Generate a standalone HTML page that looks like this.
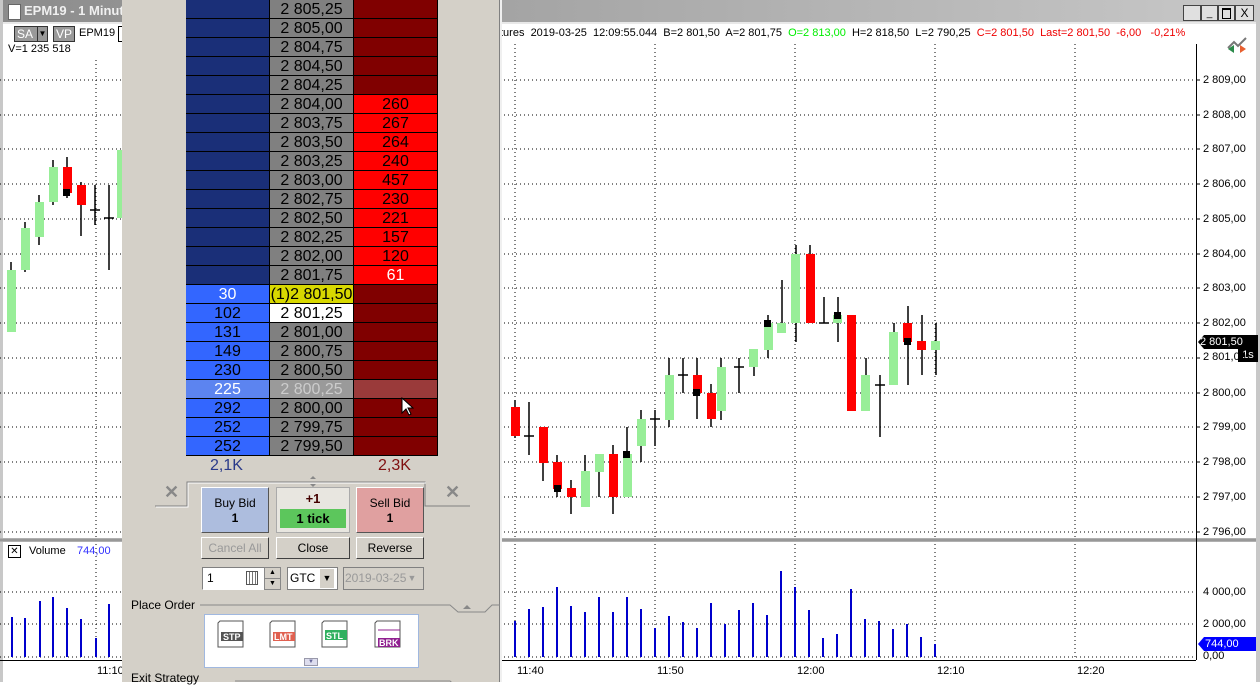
<!DOCTYPE html>
<html><head><meta charset="utf-8"><style>
body{margin:0;width:1260px;height:682px;overflow:hidden;position:relative;background:#fff;font-family:"Liberation Sans",sans-serif;}
.a{position:absolute;}
.row{position:absolute;left:186px;width:252px;height:19px;}
.c{position:absolute;top:0;height:18px;border-right:1px solid #000;border-bottom:1px solid #000;text-align:center;font-size:16px;line-height:19px;color:#000;}
.c1{left:0;width:83px;}.c2{left:84px;width:83px;}.c3{left:168px;width:83px;}
.btn{position:absolute;background:#d4d0c8;border:1px solid;border-color:#fff #404040 #404040 #fff;font-size:12px;text-align:center;line-height:20px;}
.ax{position:absolute;left:1203px;font-size:11px;color:#000;}
</style></head><body>
<div class="a" style="left:0;top:0;width:1260px;height:22px;background:linear-gradient(90deg,#8c8c8c,#c8c8c8);"></div>
<div class="a" style="left:0;top:22px;width:1260px;height:2px;background:#e8e8e8;"></div>
<div class="a" style="left:0;top:0;width:3px;height:682px;background:#c8c8c8;"></div>
<div class="a" style="left:8px;top:4px;width:11px;height:14px;background:#fff;border:1px solid #666;"></div>
<div class="a" style="left:24px;top:3px;font-size:13px;font-weight:bold;color:#f0f0f0;">EPM19 - 1 Minute</div>
<div class="a" style="left:1183px;top:5px;width:16px;height:14px;background:#e0e0e0;border:1px solid #444;"></div>
<div class="a" style="left:1201px;top:5px;width:15px;height:14px;background:#e0e0e0;border:1px solid #444;font-size:10px;line-height:16px;text-align:center;">_</div>
<div class="a" style="left:1218px;top:5px;width:15px;height:14px;background:#e0e0e0;border:1px solid #444;"><div style="margin:2px 3px;width:7px;height:8px;border:1px solid #000;border-top-width:2px"></div></div>
<div class="a" style="left:1235px;top:5px;width:17px;height:14px;background:#e0e0e0;border:1px solid #444;font-size:12px;line-height:14px;text-align:center;">X</div>
<div class="a" style="left:1256px;top:22px;width:4px;height:660px;background:#c8c8c8;"></div>

<svg class="a" style="left:0;top:0" width="1260" height="682">
<g stroke="#000" stroke-dasharray="1,3" stroke-width="1">
<line x1="0" x2="1196" y1="80" y2="80"/><line x1="0" x2="1196" y1="115" y2="115"/><line x1="0" x2="1196" y1="149" y2="149"/><line x1="0" x2="1196" y1="184" y2="184"/><line x1="0" x2="1196" y1="219" y2="219"/><line x1="0" x2="1196" y1="254" y2="254"/><line x1="0" x2="1196" y1="288" y2="288"/><line x1="0" x2="1196" y1="323" y2="323"/><line x1="0" x2="1196" y1="358" y2="358"/><line x1="0" x2="1196" y1="393" y2="393"/><line x1="0" x2="1196" y1="427" y2="427"/><line x1="0" x2="1196" y1="462" y2="462"/><line x1="0" x2="1196" y1="497" y2="497"/><line x1="0" x2="1196" y1="532" y2="532"/>
<line x1="0" x2="1196" y1="592" y2="592"/><line x1="0" x2="1196" y1="624" y2="624"/><line x1="0" x2="1196" y1="657" y2="657"/>
<line x1="96" x2="96" y1="60" y2="660"/><line x1="515" x2="515" y1="44" y2="660"/><line x1="655" x2="655" y1="44" y2="660"/><line x1="795" x2="795" y1="44" y2="660"/><line x1="935" x2="935" y1="44" y2="660"/><line x1="1075" x2="1075" y1="44" y2="660"/>
</g>
<rect x="0" y="538" width="1256" height="4" fill="#b0b0b0"/>
<line x1="0" x2="1256" y1="540" y2="540" stroke="#808080"/>
<line x1="1196.5" x2="1196.5" y1="44" y2="660" stroke="#000"/>
<line x1="0" x2="1196" y1="660.5" y2="660.5" stroke="#000"/>
<g stroke="#000" stroke-width="1.5">
<line x1="11" x2="11" y1="262" y2="332"/><line x1="25" x2="25" y1="222" y2="272"/><line x1="39" x2="39" y1="195" y2="245"/><line x1="53" x2="53" y1="160" y2="205"/><line x1="67" x2="67" y1="157" y2="198"/><line x1="81" x2="81" y1="182" y2="236"/><line x1="95" x2="95" y1="185" y2="225"/><line x1="109" x2="109" y1="185" y2="270"/>
<line x1="515" x2="515" y1="400" y2="438"/><line x1="529" x2="529" y1="402" y2="455"/><line x1="543" x2="543" y1="427" y2="481"/><line x1="557" x2="557" y1="455" y2="497"/><line x1="571" x2="571" y1="480" y2="514"/><line x1="585" x2="585" y1="455" y2="507"/><line x1="599" x2="599" y1="454" y2="497"/><line x1="613" x2="613" y1="445" y2="514"/><line x1="627" x2="627" y1="427" y2="497"/><line x1="641" x2="641" y1="410" y2="462"/><line x1="655" x2="655" y1="410" y2="446"/><line x1="669" x2="669" y1="358" y2="427"/><line x1="683" x2="683" y1="358" y2="393"/><line x1="697" x2="697" y1="358" y2="419"/><line x1="711" x2="711" y1="384" y2="427"/>
<line x1="721" x2="721" y1="358" y2="420"/><line x1="739" x2="739" y1="358" y2="393"/><line x1="754" x2="754" y1="349" y2="376"/><line x1="768" x2="768" y1="315" y2="358"/><line x1="782" x2="782" y1="280" y2="330"/><line x1="796" x2="796" y1="245" y2="342"/><line x1="810" x2="810" y1="245" y2="323"/><line x1="824" x2="824" y1="297" y2="323"/><line x1="838" x2="838" y1="297" y2="342"/><line x1="866" x2="866" y1="358" y2="411"/><line x1="880" x2="880" y1="375" y2="437"/><line x1="894" x2="894" y1="323" y2="385"/><line x1="908" x2="908" y1="306" y2="385"/><line x1="922" x2="922" y1="315" y2="375"/><line x1="936" x2="936" y1="323" y2="375"/>
<line x1="90" x2="100" y1="210" y2="210"/><line x1="104" x2="114" y1="218" y2="218"/><line x1="524" x2="534" y1="436" y2="436"/><line x1="650" x2="660" y1="419" y2="419"/><line x1="678" x2="688" y1="375" y2="375"/><line x1="734" x2="744" y1="367" y2="367"/><line x1="819" x2="829" y1="323" y2="323"/><line x1="875" x2="885" y1="385" y2="385"/>
</g>
<g fill="#98ee98">
<rect x="7" y="270" width="9" height="62"/><rect x="21" y="228" width="9" height="42"/><rect x="35" y="202" width="9" height="35"/><rect x="49" y="167" width="9" height="35"/><rect x="117" y="150" width="9" height="68"/>
<rect x="581" y="471" width="9" height="36"/><rect x="595" y="454" width="9" height="18"/><rect x="623" y="454" width="9" height="43"/><rect x="637" y="419" width="9" height="27"/><rect x="665" y="375" width="9" height="45"/>
<rect x="717" y="367" width="9" height="44"/><rect x="749" y="349" width="9" height="18"/><rect x="764" y="323" width="9" height="27"/><rect x="777" y="323" width="9" height="10"/><rect x="791" y="254" width="9" height="69"/><rect x="833" y="315" width="9" height="8"/><rect x="861" y="375" width="9" height="36"/><rect x="889" y="332" width="9" height="53"/><rect x="931" y="341" width="9" height="9"/>
</g>
<g fill="#ff0000">
<rect x="63" y="167" width="9" height="26"/><rect x="77" y="185" width="9" height="20"/>
<rect x="511" y="407" width="9" height="29"/><rect x="539" y="427" width="9" height="36"/><rect x="553" y="462" width="9" height="27"/><rect x="567" y="488" width="9" height="9"/><rect x="609" y="454" width="9" height="43"/><rect x="693" y="375" width="9" height="18"/><rect x="707" y="393" width="9" height="26"/>
<rect x="806" y="254" width="9" height="69"/><rect x="847" y="315" width="9" height="96"/><rect x="903" y="323" width="9" height="19"/><rect x="917" y="341" width="9" height="9"/>
</g>
<g fill="#000"><rect x="63" y="189" width="7" height="7"/><rect x="554" y="485" width="7" height="7"/><rect x="623" y="451" width="7" height="7"/><rect x="693" y="389" width="7" height="7"/><rect x="764" y="320" width="7" height="7"/><rect x="834" y="312" width="7" height="7"/><rect x="904" y="338" width="7" height="7"/></g>
<g stroke="#0000cc" stroke-width="2">
<line x1="12" x2="12" y1="617" y2="657"/><line x1="25" x2="25" y1="618" y2="657"/><line x1="40" x2="40" y1="601" y2="657"/><line x1="53" x2="53" y1="597" y2="657"/><line x1="67" x2="67" y1="608" y2="657"/><line x1="81" x2="81" y1="619" y2="657"/><line x1="96" x2="96" y1="638" y2="657"/><line x1="109" x2="109" y1="604" y2="657"/>
<line x1="515" x2="515" y1="621" y2="657"/><line x1="529" x2="529" y1="609" y2="657"/><line x1="543" x2="543" y1="607" y2="657"/><line x1="557" x2="557" y1="587" y2="657"/><line x1="571" x2="571" y1="606" y2="657"/><line x1="585" x2="585" y1="612" y2="657"/><line x1="599" x2="599" y1="597" y2="657"/><line x1="613" x2="613" y1="612" y2="657"/><line x1="627" x2="627" y1="597" y2="657"/><line x1="641" x2="641" y1="609" y2="657"/><line x1="655" x2="655" y1="628" y2="657"/><line x1="669" x2="669" y1="616" y2="657"/><line x1="683" x2="683" y1="622" y2="657"/><line x1="697" x2="697" y1="628" y2="657"/><line x1="711" x2="711" y1="603" y2="657"/><line x1="725" x2="725" y1="624" y2="657"/><line x1="739" x2="739" y1="610" y2="657"/><line x1="753" x2="753" y1="603" y2="657"/><line x1="767" x2="767" y1="615" y2="657"/><line x1="781" x2="781" y1="571" y2="657"/><line x1="795" x2="795" y1="587" y2="657"/><line x1="809" x2="809" y1="610" y2="657"/><line x1="823" x2="823" y1="638" y2="657"/><line x1="837" x2="837" y1="634" y2="657"/><line x1="851" x2="851" y1="589" y2="657"/><line x1="865" x2="865" y1="619" y2="657"/><line x1="879" x2="879" y1="621" y2="657"/><line x1="893" x2="893" y1="629" y2="657"/><line x1="907" x2="907" y1="624" y2="657"/><line x1="921" x2="921" y1="637" y2="657"/><line x1="935" x2="935" y1="644" y2="657"/>
</g>
<g stroke="#000"><line x1="1196" x2="1200" y1="80" y2="80"/><line x1="1196" x2="1200" y1="115" y2="115"/><line x1="1196" x2="1200" y1="149" y2="149"/><line x1="1196" x2="1200" y1="184" y2="184"/><line x1="1196" x2="1200" y1="219" y2="219"/><line x1="1196" x2="1200" y1="254" y2="254"/><line x1="1196" x2="1200" y1="288" y2="288"/><line x1="1196" x2="1200" y1="323" y2="323"/><line x1="1196" x2="1200" y1="358" y2="358"/><line x1="1196" x2="1200" y1="393" y2="393"/><line x1="1196" x2="1200" y1="427" y2="427"/><line x1="1196" x2="1200" y1="462" y2="462"/><line x1="1196" x2="1200" y1="497" y2="497"/><line x1="1196" x2="1200" y1="532" y2="532"/></g>
<polygon points="1198,342 1204,335 1258,335 1258,349 1204,349" fill="#000"/>
<polygon points="1198,644 1204,637 1256,637 1256,651 1204,651" fill="#0000ff"/>
<polyline points="1228,48 1234,42 1238,46 1246,38" fill="none" stroke="#777" stroke-width="2"/>
<polygon points="1228,49 1234,45 1234,53" fill="#2a8a4a"/><polygon points="1246,49 1240,45 1240,53" fill="#e86030"/>
</svg>
<div class="a" style="left:1200px;top:336px;font-size:11px;color:#fff;">2 801,50</div>
<div class="a" style="left:1238px;top:349px;width:20px;height:13px;background:#000;color:#fff;font-size:11px;text-align:center;">1s</div>
<div class="a" style="left:1205px;top:638px;font-size:11px;color:#fff;">744,00</div>
<div class="ax" style="top:74px">2 809,00</div><div class="ax" style="top:109px">2 808,00</div><div class="ax" style="top:143px">2 807,00</div><div class="ax" style="top:178px">2 806,00</div><div class="ax" style="top:213px">2 805,00</div><div class="ax" style="top:248px">2 804,00</div><div class="ax" style="top:282px">2 803,00</div><div class="ax" style="top:317px">2 802,00</div><div class="ax" style="top:351px">2 801,00</div><div class="ax" style="top:387px">2 800,00</div><div class="ax" style="top:421px">2 799,00</div><div class="ax" style="top:456px">2 798,00</div><div class="ax" style="top:491px">2 797,00</div><div class="ax" style="top:526px">2 796,00</div>
<div class="ax" style="top:586px">4 000,00</div><div class="ax" style="top:618px">2 000,00</div><div class="ax" style="top:650px">0,00</div>
<div class="a" style="left:97px;top:665px;font-size:11px;">11:10</div>
<div class="a" style="left:517px;top:665px;font-size:11px;">11:40</div><div class="a" style="left:657px;top:665px;font-size:11px;">11:50</div><div class="a" style="left:797px;top:665px;font-size:11px;">12:00</div><div class="a" style="left:937px;top:665px;font-size:11px;">12:10</div><div class="a" style="left:1077px;top:665px;font-size:11px;">12:20</div>
<div class="a" style="left:14px;top:26px;width:25px;height:14px;background:#999;border:1px solid #333;font-size:12px;color:#fff;line-height:14px;padding-left:2px">SA</div>
<div class="a" style="left:37px;top:26px;width:9px;height:14px;background:#999;border:1px solid #333;font-size:8px;color:#000;line-height:14px;text-align:center">▼</div>
<div class="a" style="left:53px;top:26px;width:20px;height:14px;background:#999;border:1px solid #333;font-size:12px;color:#fff;line-height:14px;text-align:center">VP</div>
<div class="a" style="left:79px;top:27px;font-size:11px;">EPM19</div>
<div class="a" style="left:118px;top:26px;width:4px;height:14px;border:1px solid #000;border-right:none;"></div>
<div class="a" style="left:8px;top:43px;font-size:11px;">V=1 235 518</div>
<div class="a" style="left:8px;top:545px;width:11px;height:11px;border:1px solid #000;font-size:10px;line-height:11px;text-align:center">✕</div>
<div class="a" style="left:29px;top:545px;font-size:11px;">Volume</div>
<div class="a" style="left:77px;top:545px;font-size:11px;color:#3030ff;">744,00</div>
<div class="a" style="left:500px;top:27px;font-size:11px;white-space:nowrap;">tures&nbsp; 2019-03-25&nbsp; 12:09:55.044&nbsp; B=2 801,50&nbsp; A=2 801,75&nbsp; <span style="color:#00ee00">O=2 813,00</span>&nbsp; H=2 818,50&nbsp; L=2 790,25&nbsp; <span style="color:#ee0000">C=2 801,50&nbsp; Last=2 801,50&nbsp; -6,00&nbsp;&nbsp; -0,21%</span></div>

<div class="a" style="left:122px;top:0;width:377px;height:682px;background:#d4d0c8;"></div>
<div class="a" style="left:499px;top:0;width:2px;height:682px;background:#f0f0f0;border-left:1px solid #808080"></div>
<div class="row" style="top:0"><div class="c c1" style="background:#1a2f78"></div><div class="c c2" style="background:#808080">2 805,25</div><div class="c c3" style="background:#800000"></div></div>
<div class="row" style="top:19px"><div class="c c1" style="background:#1a2f78"></div><div class="c c2" style="background:#808080">2 805,00</div><div class="c c3" style="background:#800000"></div></div>
<div class="row" style="top:38px"><div class="c c1" style="background:#1a2f78"></div><div class="c c2" style="background:#808080">2 804,75</div><div class="c c3" style="background:#800000"></div></div>
<div class="row" style="top:57px"><div class="c c1" style="background:#1a2f78"></div><div class="c c2" style="background:#808080">2 804,50</div><div class="c c3" style="background:#800000"></div></div>
<div class="row" style="top:76px"><div class="c c1" style="background:#1a2f78"></div><div class="c c2" style="background:#808080">2 804,25</div><div class="c c3" style="background:#800000"></div></div>
<div class="row" style="top:95px"><div class="c c1" style="background:#1a2f78"></div><div class="c c2" style="background:#808080">2 804,00</div><div class="c c3" style="background:#ff0000">260</div></div>
<div class="row" style="top:114px"><div class="c c1" style="background:#1a2f78"></div><div class="c c2" style="background:#808080">2 803,75</div><div class="c c3" style="background:#ff0000">267</div></div>
<div class="row" style="top:133px"><div class="c c1" style="background:#1a2f78"></div><div class="c c2" style="background:#808080">2 803,50</div><div class="c c3" style="background:#ff0000">264</div></div>
<div class="row" style="top:152px"><div class="c c1" style="background:#1a2f78"></div><div class="c c2" style="background:#808080">2 803,25</div><div class="c c3" style="background:#ff0000">240</div></div>
<div class="row" style="top:171px"><div class="c c1" style="background:#1a2f78"></div><div class="c c2" style="background:#808080">2 803,00</div><div class="c c3" style="background:#ff0000">457</div></div>
<div class="row" style="top:190px"><div class="c c1" style="background:#1a2f78"></div><div class="c c2" style="background:#808080">2 802,75</div><div class="c c3" style="background:#ff0000">230</div></div>
<div class="row" style="top:209px"><div class="c c1" style="background:#1a2f78"></div><div class="c c2" style="background:#808080">2 802,50</div><div class="c c3" style="background:#ff0000">221</div></div>
<div class="row" style="top:228px"><div class="c c1" style="background:#1a2f78"></div><div class="c c2" style="background:#808080">2 802,25</div><div class="c c3" style="background:#ff0000">157</div></div>
<div class="row" style="top:247px"><div class="c c1" style="background:#1a2f78"></div><div class="c c2" style="background:#808080">2 802,00</div><div class="c c3" style="background:#ff0000">120</div></div>
<div class="row" style="top:266px"><div class="c c1" style="background:#1a2f78"></div><div class="c c2" style="background:#808080">2 801,75</div><div class="c c3" style="background:#ff0000;color:#fff">61</div></div>
<div class="row" style="top:285px"><div class="c c1" style="background:#3366ff;color:#fff">30</div><div class="c c2" style="background:#d8d800">(1)2 801,50</div><div class="c c3" style="background:#800000"></div></div>
<div class="row" style="top:304px"><div class="c c1" style="background:#3366ff">102</div><div class="c c2" style="background:#fff">2 801,25</div><div class="c c3" style="background:#800000"></div></div>
<div class="row" style="top:323px"><div class="c c1" style="background:#3366ff">131</div><div class="c c2" style="background:#808080">2 801,00</div><div class="c c3" style="background:#800000"></div></div>
<div class="row" style="top:342px"><div class="c c1" style="background:#3366ff">149</div><div class="c c2" style="background:#808080">2 800,75</div><div class="c c3" style="background:#800000"></div></div>
<div class="row" style="top:361px"><div class="c c1" style="background:#3366ff">230</div><div class="c c2" style="background:#808080">2 800,50</div><div class="c c3" style="background:#800000"></div></div>
<div class="row" style="top:380px"><div class="c c1" style="background:#5c84f0;color:#fff">225</div><div class="c c2" style="background:#9a9a9a;color:#ccc">2 800,25</div><div class="c c3" style="background:#9a3a3a"></div></div>
<div class="row" style="top:399px"><div class="c c1" style="background:#3366ff">292</div><div class="c c2" style="background:#808080">2 800,00</div><div class="c c3" style="background:#800000"></div></div>
<div class="row" style="top:418px"><div class="c c1" style="background:#3366ff">252</div><div class="c c2" style="background:#808080">2 799,75</div><div class="c c3" style="background:#800000"></div></div>
<div class="row" style="top:437px"><div class="c c1" style="background:#3366ff">252</div><div class="c c2" style="background:#808080">2 799,50</div><div class="c c3" style="background:#800000"></div></div>
<svg class="a" style="left:400px;top:397px" width="14" height="20"><polygon points="2,1 2,16 6,12 9,18 11,17 8,11 13,11" fill="#fff" stroke="#000"/></svg>
<div class="a" style="left:210px;top:457px;font-size:16px;color:#2a3a8a;">2,1K</div>
<div class="a" style="left:378px;top:457px;font-size:16px;color:#801010;">2,3K</div>
<svg class="a" style="left:155px;top:475px" width="315" height="35"><polyline points="0,31 32,31 32,7 270,7 270,31 315,31" fill="none" stroke="#808080"/><polyline points="1,32 33,32 33,8 271,8" fill="none" stroke="#fff"/>
<text x="9" y="23" font-size="18" font-weight="bold" fill="#888" font-family="Liberation Sans">✕</text><text x="290" y="23" font-size="18" font-weight="bold" fill="#888" font-family="Liberation Sans">✕</text>
<polygon points="155,4 158,1 161,4" fill="#888"/><polygon points="155,9 158,12 161,9" fill="#888"/></svg>
<div class="a" style="left:201px;top:487px;width:66px;height:44px;background:#adbdde;border:1px solid;border-color:#fff #555 #555 #fff;text-align:center;font-size:12px;line-height:15px;"><div style="margin-top:8px">Buy Bid</div><b>1</b></div>
<div class="a" style="left:276px;top:487px;width:72px;height:44px;background:#e8e6e0;border:1px solid #aaa;text-align:center;"><div style="font-size:13px;font-weight:bold;color:#400;margin-top:3px">+1</div><div style="margin:3px 3px 0;height:19px;background:#5cc65c;font-size:13px;font-weight:bold;line-height:19px">1 tick</div></div>
<div class="a" style="left:356px;top:487px;width:66px;height:44px;background:#e0a0a0;border:1px solid;border-color:#fff #555 #555 #fff;text-align:center;font-size:12px;line-height:15px"><div style="margin-top:8px">Sell Bid</div><b>1</b></div>
<div class="btn" style="left:201px;top:537px;width:66px;height:20px;color:#999">Cancel All</div>
<div class="btn" style="left:276px;top:537px;width:72px;height:20px;">Close</div>
<div class="btn" style="left:356px;top:537px;width:66px;height:20px;">Reverse</div>
<div class="a" style="left:202px;top:567px;width:58px;height:21px;background:#fff;border:1px solid;border-color:#808080 #fff #fff #808080;font-size:12px;line-height:20px;padding-left:4px">1</div>
<div class="a" style="left:246px;top:571px;width:10px;height:12px;border:1px solid #555;background:repeating-linear-gradient(90deg,#fff 0 2px,#777 2px 3px)"></div>
<div class="a" style="left:264px;top:567px;width:15px;height:10px;background:#d4d0c8;border:1px solid #888;font-size:7px;text-align:center;line-height:10px">▲</div>
<div class="a" style="left:264px;top:578px;width:15px;height:10px;background:#d4d0c8;border:1px solid #888;font-size:7px;text-align:center;line-height:10px">▼</div>
<div class="a" style="left:287px;top:567px;width:47px;height:21px;background:#fff;border:1px solid #808080;font-size:12px;line-height:20px;padding-left:2px">GTC</div>
<div class="a" style="left:320px;top:569px;width:14px;height:19px;background:#d4d0c8;font-size:9px;text-align:center;line-height:19px">▼</div>
<div class="a" style="left:343px;top:567px;width:78px;height:21px;background:#d4d0c8;border:1px solid #808080;font-size:12px;line-height:20px;color:#999;padding-left:1px">2019-03-25</div>
<div class="a" style="left:405px;top:569px;width:14px;height:19px;font-size:9px;text-align:center;line-height:19px;color:#999">▼</div>
<div class="a" style="left:131px;top:598px;font-size:12px;">Place Order</div>
<svg class="a" style="left:190px;top:595px" width="310" height="87"><polyline points="10,10 260,10 268,17 295,17 302,10 310,10" fill="none" stroke="#888"/><polygon points="273,14 281,14 277,10" fill="#888"/><polyline points="45,86 260,86 268,93" fill="none" stroke="#888"/></svg>
<div class="a" style="left:204px;top:614px;width:213px;height:52px;background:#fff;border:1px solid #a0b8e0;"></div>
<div class="a" style="left:304px;top:658px;width:12px;height:6px;background:#dde;border:1px solid #99a;font-size:6px;line-height:6px;text-align:center;color:#669">▼</div>
<svg class="a" style="left:215px;top:620px" width="200" height="40" font-family="Liberation Sans" font-size="9" font-weight="bold">
<g><path d="M5,1 H28 V27 H3 V3 Z" fill="#fff" stroke="#555"/><rect x="6" y="12" width="22" height="9" fill="#555"/><text x="8" y="20" fill="#fff">STP</text></g>
<g transform="translate(52,0)"><path d="M5,1 H28 V27 H3 V3 Z" fill="#fff" stroke="#555"/><rect x="6" y="12" width="22" height="9" fill="#e06050"/><text x="7" y="20" fill="#fff">LMT</text></g>
<g transform="translate(104,0)"><path d="M5,1 H28 V27 H3 V3 Z" fill="#fff" stroke="#555"/><rect x="6" y="10" width="22" height="10" fill="#30b060"/><text x="7" y="19" fill="#fff">STL</text></g>
<g transform="translate(157,0)"><path d="M5,1 H28 V27 H3 V3 Z" fill="#fff" stroke="#555"/><rect x="6" y="18" width="22" height="9" fill="#902090"/><text x="7" y="26" fill="#fff">BRK</text><line x1="6" x2="28" y1="10" y2="10" stroke="#902090"/></g>
</svg>
<div class="a" style="left:131px;top:671px;font-size:12px;">Exit Strategy</div>
</body></html>
